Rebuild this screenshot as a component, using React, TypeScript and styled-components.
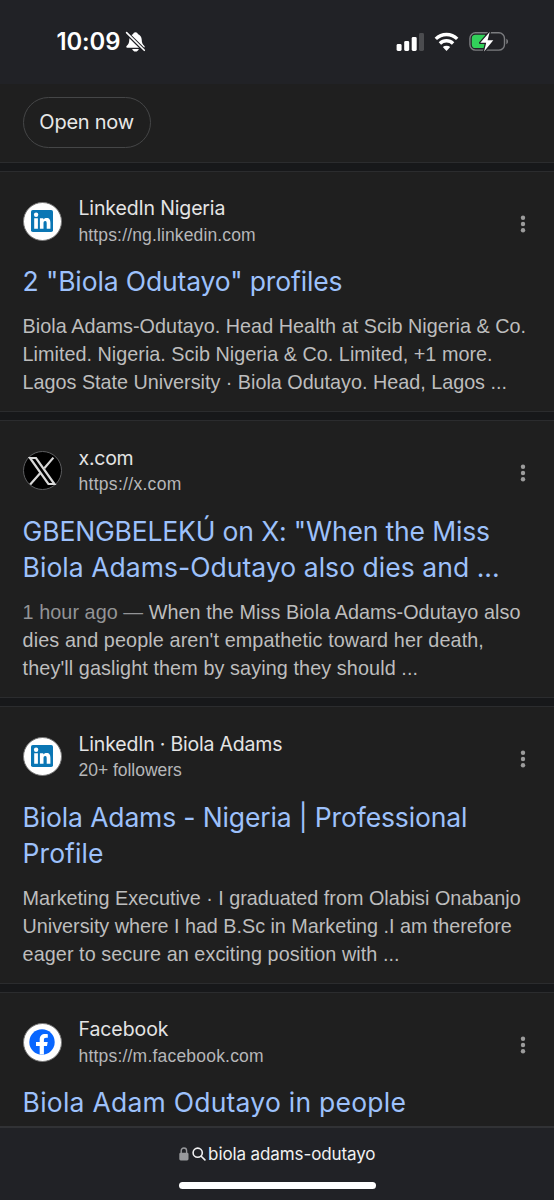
import React from "react";
import styled, { createGlobalStyle } from "styled-components";

const GlobalStyle = createGlobalStyle`
  *, *::before, *::after { box-sizing: border-box; }
  html, body { margin: 0; padding: 0; background: #1f1f1f; overflow: hidden; }
`;

const display = `"Inter", "Roboto", sans-serif`;
const body = `"Liberation Sans", Arial, sans-serif`;

const Phone = styled.div`
  display: flex;
  flex-direction: column;
  width: 554px;
  height: 1200px;
  overflow: hidden;
  background: #17181a;
`;

const StatusBar = styled.header`
  display: flex;
  flex: none;
  justify-content: space-between;
  height: 84px;
  padding: 27px 45px 0 56.5px;
  background: #212226;
`;

const StatusGroup = styled.div`
  display: flex;
  align-items: center;
  height: 30px;
`;

const Clock = styled.span`
  margin-right: 4.5px;
  color: #fff;
  font: 600 23.8px/30px ${display};
  letter-spacing: -0.1px;
`;

const Results = styled.main`
  display: flex;
  flex: 1;
  flex-direction: column;
  gap: 8.6px;
  min-height: 0;
  overflow: hidden;
`;

const FilterStrip = styled.section`
  flex: none;
  height: 78.5px;
  padding: 13px 22.6px 0;
  background: #1f1f1f;
  border-bottom: 1px solid #2b2c2e;
`;

const Chip = styled.button`
  display: block;
  width: 128px;
  height: 51px;
  padding: 0 0 1px;
  border: 1.5px solid #454647;
  border-radius: 26px;
  background: transparent;
  color: #e8e8e8;
  font: 400 20px/30px ${display};
  letter-spacing: -0.25px;
  white-space: nowrap;
`;

const Card = styled.article`
  flex: none;
  padding: 23.2px 22.6px 14.5px;
  background: #1f1f1f;
  border-top: 1px solid #2b2c2e;
  border-bottom: 1px solid #2b2c2e;
`;

const SourceRow = styled.div`
  display: flex;
  align-items: center;
  margin-bottom: 16.2px;
`;

const Avatar = styled.span<{ $dark?: boolean }>`
  display: grid;
  flex: none;
  place-items: center;
  width: 39px;
  height: 39px;
  margin: 0 16.6px 0 0.3px;
  border: 1px solid ${(p) => (p.$dark ? "#5d5e60" : "#777")};
  border-radius: 50%;
  background: ${(p) => (p.$dark ? "#000" : "#fff")};
`;

const SourceText = styled.div`
  display: flex;
  flex: 1;
  flex-direction: column;
  gap: 1.8px;
`;

type Spaced = { $ls: number };

const SourceName = styled.span<Spaced>`
  color: #e4e4e4;
  font: 400 19.5px/26px ${display};
  letter-spacing: ${(p) => p.$ls}px;
  white-space: nowrap;
`;

const SourceMeta = styled.span<Spaced>`
  color: #b6b7b9;
  font: 400 17.5px/24px ${body};
  letter-spacing: ${(p) => p.$ls}px;
  white-space: nowrap;
`;

const MenuButton = styled.button`
  display: grid;
  place-items: center;
  width: 20px;
  height: 30px;
  margin: 5px -1.6px 0 0;
  padding: 0;
  border: 0;
  background: none;
`;

const Title = styled.h3`
  margin: 0 0 12px;
  color: #9dc1fb;
  font: 400 26.5px/36.5px ${display};
`;

const Snippet = styled.p`
  margin: 0;
  color: #bdbdbd;
  font: 400 19.8px/28.2px ${body};
`;

const Line = styled.span<Spaced>`
  display: block;
  letter-spacing: ${(p) => p.$ls}px;
  white-space: nowrap;
`;

const Age = styled.span`
  color: #939496;
`;

const AddressBar = styled.footer`
  display: flex;
  flex: none;
  flex-direction: column;
  align-items: center;
  height: 74px;
  padding-top: 14px;
  border-top: 2px solid #313235;
  background: #212226;
`;

const Address = styled.div`
  display: flex;
  align-items: center;
  height: 24px;
  color: #f1f1f2;
  font: 400 17px/24px ${display};
  letter-spacing: -0.11px;
  white-space: nowrap;

  svg { display: block; }
  svg + svg { margin: 0 2px 0 3.5px; }
`;

const HomeIndicator = styled.div`
  width: 197px;
  height: 7px;
  margin-top: 15.5px;
  border-radius: 4px;
  background: #fff;
`;

const MutedBell = () => (
  <svg width="21" height="22" viewBox="0 0 21 22">
    <path
      d="M10.500 1.200c1.300 0 2.100.8 2.300 1.800 2.500.9 3.800 3 3.900 5.600.1 3.500.9 5 2.700 6.500.5.5.5 1.700-.6 1.700H2.200c-1.100 0-1.100-1.200-.6-1.700 1.800-1.500 2.600-3 2.700-6.500.1-2.600 1.400-4.700 3.900-5.600.2-1 1-1.800 2.300-1.800z"
      fill="#fff"
    />
    <path d="M7.200 18h6.600c-.4 1.500-1.600 2.600-3.300 2.600S7.600 19.500 7.200 18z" fill="#fff" />
    <path d="M1.300 1.600l18.200 18" stroke="#212226" strokeWidth="3.800" />
    <path d="M1.600 1.600l17.700 17.700" stroke="#fff" strokeWidth="1.600" strokeLinecap="round" />
  </svg>
);

const Signal = () => (
  <svg width="28" height="20" viewBox="0 0 28 20">
    <rect x="0.600" y="12" width="5" height="7" rx="1.400" fill="#fff" />
    <rect x="8.200" y="9" width="5" height="10" rx="1.400" fill="#fff" />
    <rect x="15.700" y="5" width="5" height="14" rx="1.400" fill="#fff" />
    <rect x="23" y="1" width="5" height="18" rx="1.400" fill="#4b4c4f" />
  </svg>
);

const Wifi = () => (
  <svg width="25" height="20" viewBox="0 0 25 20">
    <g fill="none" stroke="#fff" strokeWidth="3.400">
      <path d="M1.800 6.900a15.300 15.300 0 0 1 21.400 0" />
      <path d="M5.900 11.500a9.400 9.400 0 0 1 13.200 0" />
    </g>
    <path d="M12.500 18.900l-3.700-3.800a5.400 5.400 0 0 1 7.400 0z" fill="#fff" />
  </svg>
);

const Battery = () => (
  <svg width="40" height="22" viewBox="0 0 40 22">
    <rect x="0.900" y="1.800" width="34.600" height="17.300" rx="5.600" fill="none" stroke="#7b7c7f" strokeWidth="1.400" />
    <path d="M37.300 7.700v5.600c1-.4 1.700-1.500 1.700-2.800s-.7-2.400-1.700-2.800z" fill="#7b7c7f" />
    <path d="M6.500 3.800H16v13.300H6.500A3.700 3.700 0 0 1 2.800 13.400V7.500A3.700 3.700 0 0 1 6.500 3.800z" fill="#32d05a" />
    <path
      d="M20.700 1L11.300 11.800h5.900l-2.100 8.600L24.300 9.200h-5.700z"
      fill="#fff"
      stroke="#212226"
      strokeWidth="2.600"
      strokeLinejoin="round"
      paintOrder="stroke"
    />
  </svg>
);

const Dots = () => (
  <svg width="6" height="20" viewBox="0 0 6 20">
    {[3.700, 10, 16.300].map((y) => (
      <circle key={y} cx="3" cy={y} r="2.200" fill="#9c9c9c" />
    ))}
  </svg>
);

const LinkedInLogo = () => (
  <svg width="24" height="24" viewBox="0 0 24 24">
    <rect x="1" y="1" width="22" height="22" rx="1.800" fill="#0a76b4" />
    <circle cx="6.100" cy="5.800" r="2.200" fill="#fff" />
    <path
      d="M4.200 9.200h3.700v10.600H4.200zM9.900 9.200h3.400v1.400c.6-1 1.700-1.700 3.200-1.700 3.200 0 3.900 2.100 3.900 4.900v6h-3.700v-5.200c0-1.400-.1-2.700-1.500-2.700-1.500 0-1.700 1.200-1.700 2.600v5.300H9.900z"
      fill="#fff"
    />
  </svg>
);

const XLogo = () => (
  <svg width="30" height="30" viewBox="0 0 30 30">
    <g fill="none" stroke="#d9d9d9" strokeWidth="2.200">
      <path d="M3 2h6l18.400 26h-6z" />
      <path d="M26.400 1.600L17.300 12.300M13.100 17.300L3.200 28.400" />
    </g>
  </svg>
);

const FacebookLogo = () => (
  <svg width="26" height="26" viewBox="0 0 26 26">
    <circle cx="13" cy="13" r="12.700" fill="#0866ff" />
    <path
      d="M10.700 25.600v-8.500H7v-4.100h3.700v-2.100c0-4.200 1.900-6 5.700-6 .9 0 1.900.1 2.400.3v3.600h-1.700c-1.700 0-2.200.7-2.200 2.100v2.100h3.800l-.7 4.100h-3.100v8.500z"
      fill="#fff"
    />
  </svg>
);

const Lock = () => (
  <svg width="10" height="14" viewBox="0 0 10 14">
    <rect x="0.300" y="5.700" width="9.200" height="7.700" rx="1.400" fill="#98999c" />
    <path d="M2.200 6V3.700a2.700 2.700 0 0 1 5.400 0V6" fill="none" stroke="#98999c" strokeWidth="1.400" />
  </svg>
);

const Magnifier = () => (
  <svg width="14" height="14" viewBox="0 0 14 14" fill="none" stroke="#f1f1f2" strokeWidth="1.600" strokeLinecap="round">
    <circle cx="5.700" cy="5.700" r="4.600" />
    <path d="M9.200 9.200l3.700 3.700" />
  </svg>
);

type TextLine = { text: string; ls: number; age?: string };
type Result = {
  logo: React.ReactNode;
  dark?: boolean;
  name: TextLine;
  meta: TextLine;
  title: TextLine[];
  snippet: TextLine[];
};

const results: Result[] = [
  {
    logo: <LinkedInLogo />,
    name: { text: "LinkedIn Nigeria", ls: -0.15 },
    meta: { text: "https://ng.linkedin.com", ls: 0.14 },
    title: [{ text: '2 "Biola Odutayo" profiles', ls: -0.13 }],
    snippet: [
      { text: "Biola Adams-Odutayo. Head Health at Scib Nigeria & Co.", ls: 0.04 },
      { text: "Limited. Nigeria. Scib Nigeria & Co. Limited, +1 more.", ls: 0.02 },
      { text: "Lagos State University · Biola Odutayo. Head, Lagos ...", ls: -0.01 },
    ],
  },
  {
    logo: <XLogo />,
    dark: true,
    name: { text: "x.com", ls: -0.25 },
    meta: { text: "https://x.com", ls: 0.3 },
    title: [
      { text: 'GBENGBELEKÚ on X: "When the Miss', ls: -0.16 },
      { text: "Biola Adams-Odutayo also dies and ...", ls: 0.04 },
    ],
    snippet: [
      { age: "1 hour ago — ", text: "When the Miss Biola Adams-Odutayo also", ls: 0.06 },
      { text: "dies and people aren't empathetic toward her death,", ls: 0.11 },
      { text: "they'll gaslight them by saying they should ...", ls: 0.1 },
    ],
  },
  {
    logo: <LinkedInLogo />,
    name: { text: "LinkedIn · Biola Adams", ls: -0.2 },
    meta: { text: "20+ followers", ls: -0.02 },
    title: [
      { text: "Biola Adams - Nigeria | Professional", ls: -0.14 },
      { text: "Profile", ls: 0.05 },
    ],
    snippet: [
      { text: "Marketing Executive · I graduated from Olabisi Onabanjo", ls: 0 },
      { text: "University where I had B.Sc in Marketing .I am therefore", ls: -0.02 },
      { text: "eager to secure an exciting position with ...", ls: 0.07 },
    ],
  },
  {
    logo: <FacebookLogo />,
    name: { text: "Facebook", ls: -0.08 },
    meta: { text: "https://m.facebook.com", ls: 0.2 },
    title: [{ text: "Biola Adam Odutayo in people", ls: 0.24 }],
    snippet: [],
  },
];

const ResultCard = ({ logo, dark, name, meta, title, snippet }: Result) => (
  <Card>
    <SourceRow>
      <Avatar $dark={dark}>{logo}</Avatar>
      <SourceText>
        <SourceName $ls={name.ls}>{name.text}</SourceName>
        <SourceMeta $ls={meta.ls}>{meta.text}</SourceMeta>
      </SourceText>
      <MenuButton aria-label="More options">
        <Dots />
      </MenuButton>
    </SourceRow>
    <Title>
      {title.map((l) => (
        <Line key={l.text} $ls={l.ls}>{l.text}</Line>
      ))}
    </Title>
    {snippet.length > 0 && (
      <Snippet>
        {snippet.map((l) => (
          <Line key={l.text} $ls={l.ls}>
            {l.age && <Age>{l.age}</Age>}
            {l.text}
          </Line>
        ))}
      </Snippet>
    )}
  </Card>
);

const StatusIcons = styled(StatusGroup)`
  gap: 10px;
`;

export default function App() {
  return (
    <Phone>
      <GlobalStyle />
      <StatusBar>
        <StatusGroup>
          <Clock>10:09</Clock>
          <MutedBell />
        </StatusGroup>
        <StatusIcons>
          <Signal />
          <Wifi />
          <Battery />
        </StatusIcons>
      </StatusBar>
      <Results>
        <FilterStrip>
          <Chip>Open now</Chip>
        </FilterStrip>
        {results.map((r) => (
          <ResultCard key={r.name.text} {...r} />
        ))}
      </Results>
      <AddressBar>
        <Address>
          <Lock />
          <Magnifier />
          biola adams-odutayo
        </Address>
        <HomeIndicator />
      </AddressBar>
    </Phone>
  );
}
